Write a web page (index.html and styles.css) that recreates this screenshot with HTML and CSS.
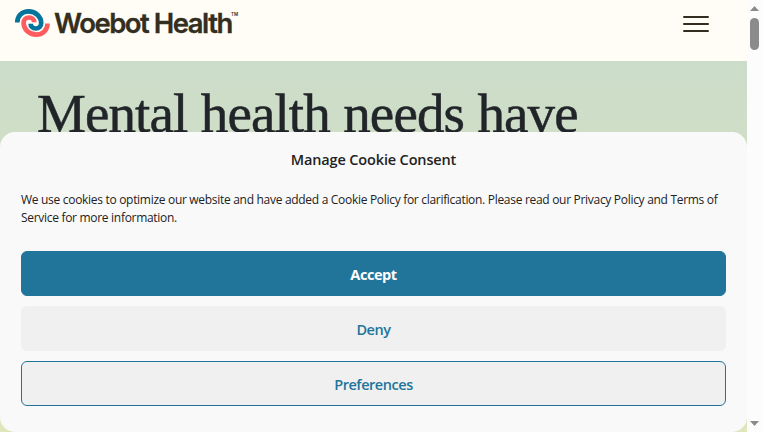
FILE: index.html
```html
<!DOCTYPE html>
<html lang="en">
<head>
    <meta charset="UTF-8">
    <meta name="viewport" content="width=device-width, initial-scale=1.0">
    <title>Woebot Health</title>
    <link rel="stylesheet" href="styles.css">
</head>
<body>
    <div class="page">
        <header class="header">
            <a class="logo">
                <svg class="logo-mark" width="36" height="30" viewBox="0 0 36 30">
                    <path class="swirl-blue" d="M2.3 14.6 C2.3 7.5 7.5 3.4 13.5 3.4 C21 3.4 26.2 9 26.2 15 C26.2 18.5 23.8 20.5 20.8 20.5 C17.6 20.5 15.6 18.4 15.6 15.8"/>
                    <path class="swirl-red" d="M2.3 14.6 C2.3 7.5 7.5 3.4 13.5 3.4 C21 3.4 26.2 9 26.2 15 C26.2 18.5 23.8 20.5 20.8 20.5 C17.6 20.5 15.6 18.4 15.6 15.8" transform="rotate(180 17.4 15)"/>
                </svg>
                <span class="logo-text">Woebot Health</span>
                <span class="logo-tm">TM</span>
            </a>
            <div class="menu">
                <span></span>
                <span></span>
                <span></span>
            </div>
        </header>

        <main class="hero">
            <h1>Mental health needs have</h1>
        </main>

        <div class="cookie-banner">
            <div class="cookie-title">Manage Cookie Consent</div>
            <p class="cookie-message">We use cookies to optimize our website and have added a Cookie Policy for clarification. Please read our Privacy Policy and Terms of<br>Service for more information.</p>
            <div class="cookie-buttons">
                <button class="btn accept">Accept</button>
                <button class="btn deny">Deny</button>
                <button class="btn preferences">Preferences</button>
            </div>
        </div>
    </div>

    <div class="scrollbar">
        <svg width="9" height="5" viewBox="0 0 9 5"><path d="M4.5 0 L9 5 H0 Z"/></svg>
        <div class="thumb"></div>
        <svg class="down" width="9" height="5" viewBox="0 0 9 5"><path d="M0 0 H9 L4.5 5 Z"/></svg>
    </div>
</body>
</html>
```

FILE: styles.css
```css
* {
    box-sizing: border-box;
}

body {
    margin: 0;
    height: 432px;
    display: flex;
    overflow: hidden;
    font-family: "Open Sans", sans-serif;
}

.page {
    position: relative;
    width: 747px;
    height: 432px;
    display: flex;
    flex-direction: column;
}

.header {
    height: 61px;
    padding: 8px 38px 0 15px;
    display: flex;
    justify-content: space-between;
    align-items: flex-start;
    background-color: #fffdf6;
}

.logo {
    display: flex;
    align-items: flex-start;
    color: #332e20;
    white-space: nowrap;
}

.logo-mark {
    display: block;
}

.logo-mark path {
    fill: none;
    stroke-width: 4.7;
}

.logo-mark .swirl-blue {
    stroke: #04749c;
}

.logo-mark .swirl-red {
    stroke: #ff5c60;
}

.logo-text {
    width: 177px;
    margin-left: 3px;
    font-family: Inter, sans-serif;
    font-size: 27.5px;
    font-weight: 600;
    line-height: 31px;
    letter-spacing: -1.5px;
    -webkit-text-stroke: 0.3px #332e20;
}

.logo-tm {
    font-family: Inter, sans-serif;
    font-size: 4.5px;
    font-weight: 600;
    line-height: 13px;
}

.menu {
    display: flex;
    flex-direction: column;
    gap: 5px;
    padding-top: 8px;
}

.menu span {
    width: 26px;
    height: 2px;
    border-radius: 1px;
    background-color: #332e20;
}

.hero {
    flex: 1;
    padding: 21px 37px;
    background: linear-gradient(#cbdcc9, #cfdec7 20%, #e0e5bc);
}

h1 {
    margin: 0;
    font-family: "Liberation Serif", serif;
    font-size: 55px;
    font-weight: 400;
    line-height: 63px;
    letter-spacing: -0.9px;
    word-spacing: 0.6px;
    white-space: nowrap;
    color: #212529;
    -webkit-text-stroke: 0.5px #212529;
}

.cookie-banner {
    position: absolute;
    left: 0;
    bottom: 0;
    width: 747px;
    height: 300px;
    padding: 16px 21px 26px;
    border-radius: 15px;
    background-color: #f9f9f9;
    color: #222;
}

.cookie-title {
    font-size: 14.5px;
    font-weight: 600;
    line-height: 24px;
    letter-spacing: -0.15px;
    text-align: center;
}

.cookie-message {
    margin: 19px 0 24px;
    font-size: 12px;
    line-height: 18px;
    letter-spacing: -0.3px;
    white-space: nowrap;
}

.cookie-buttons {
    display: flex;
    flex-direction: column;
    gap: 10px;
}

.btn {
    height: 45px;
    padding: 2px 0 0;
    border: 1px solid #f0f0f0;
    border-radius: 6px;
    background-color: #f0f0f0;
    color: #21759b;
    font-family: inherit;
    font-size: 14.5px;
    font-weight: 600;
    letter-spacing: -0.45px;
}

.accept {
    border-color: #21759b;
    background-color: #21759b;
    color: #fff;
    font-weight: 700;
}

.preferences {
    border-color: #21759b;
}

.scrollbar {
    width: 15px;
    padding: 6px 0;
    display: flex;
    flex-direction: column;
    align-items: center;
    background-color: #fcfcfc;
}

.scrollbar path {
    fill: #8b8b8b;
}

.thumb {
    width: 9px;
    height: 32px;
    margin-top: 7px;
    border-radius: 5px;
    background-color: #8b8b8b;
}

.down {
    margin-top: auto;
}
```
